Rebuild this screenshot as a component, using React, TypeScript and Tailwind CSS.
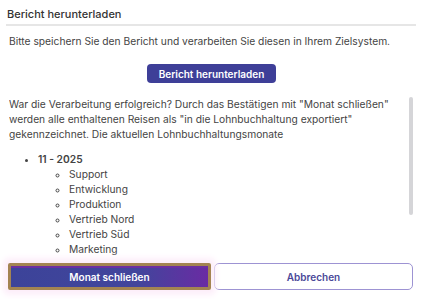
import React from "react";

export default function App() {
  const items = ["Support", "Entwicklung", "Produktion", "Vertrieb Nord", "Vertrieb Süd", "Marketing", "Vertrieb", "Einkauf", "Personal"];
  return (
    <div className="w-[423px] h-[299px] bg-white flex flex-col overflow-hidden font-['Inter',sans-serif] text-[#444]">
      <div className="pl-[6px] pr-[7px] pt-[6px]">
        <div className="pl-[1px] text-[11px] leading-[16px] font-medium text-[#333]">Bericht herunterladen</div>
        <div className="mt-[2px] h-[2px] bg-[#e6e6e6]" />
      </div>
      <div className="px-[9px] mt-[8px] text-[10.25px] leading-[15px]">
        Bitte speichern Sie den Bericht und verarbeiten Sie diesen in Ihrem Zielsystem.
      </div>
      <div className="mt-[15px] flex justify-center">
        <button className="h-[19px] w-[129px] rounded-[4px] bg-[#3e3f98] text-white text-[10px] font-semibold leading-none">
          Bericht herunterladen
        </button>
      </div>
      <div className="mt-[14px] h-[162px] flex pl-[9px] pr-[10px]">
        <div className="flex-1 overflow-hidden pr-[6px] text-[10.25px] leading-[15px]">
          <p>
            War die Verarbeitung erfolgreich? Durch das Bestätigen mit "Monat schließen" werden alle enthaltenen Reisen als "in die Lohnbuchhaltung exportiert" gekennzeichnet. Die aktuellen Lohnbuchhaltungsmonate
          </p>
          <ul className="mt-[10px] list-disc pl-[29px]">
            <li className="font-semibold">
              11 - 2025
              <ul className="list-[circle] pl-[31px] font-normal">
                {items.map((i) => (
                  <li key={i}>{i}</li>
                ))}
              </ul>
            </li>
          </ul>
        </div>
        <div className="w-[4px] flex flex-col">
          <div className="h-[118px] rounded-full bg-[#d5d5d8]" />
        </div>
      </div>
      <div className="flex gap-[3px] pl-[8px] pr-[10px] pt-[4px] bg-white">
        <button className="relative flex-1 h-[27px] rounded-[2px] border-[3px] border-[#a38452] bg-[linear-gradient(to_right,#3c4399_0%,#42459c_65%,#6a2ba3_100%)] shadow-[inset_0_2px_0_#6c2fa2,0_0_6px_5px_#fdeefa] text-white text-[10px] font-semibold leading-none">
          Monat schließen
        </button>
        <button className="flex-1 h-[27px] rounded-[5px] border border-[#9d93d3] bg-white text-[#4a4898] text-[10px] font-semibold leading-none">
          Abbrechen
        </button>
      </div>
    </div>
  );
}
